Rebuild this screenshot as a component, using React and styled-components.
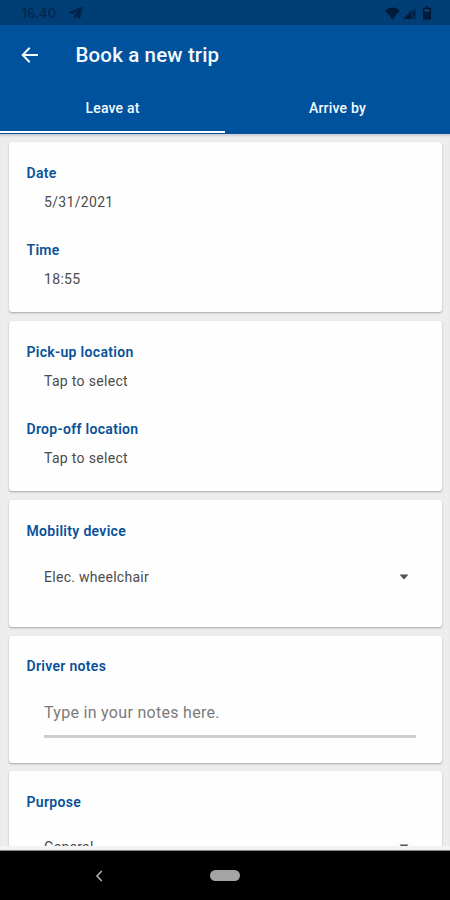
import React from "react";
import styled, { createGlobalStyle } from "styled-components";

const GlobalStyle = createGlobalStyle`
  * { box-sizing: border-box; }
  body { margin: 0; background: #000; font-family: Roboto, sans-serif; }
`;

const Screen = styled.div`
  width: 450px;
  height: 900px;
  display: flex;
  flex-direction: column;
  overflow: hidden;
  background: #ededee;
`;

const StatusBar = styled.div`
  height: 25px;
  flex: none;
  display: flex;
  align-items: center;
  padding: 1px 18px 0 21.5px;
  background: #003e75;
  color: #032348;
  svg { display: block; }
`;

const Clock = styled.span`
  width: 46.5px;
  font: 400 13.5px/20px Inter, sans-serif;
  white-space: nowrap;
`;

const StatusIcons = styled.div`
  margin-left: auto;
  display: flex;
  align-items: center;
  gap: 3px;
  svg:last-child { margin-left: 2px; }
`;

const Header = styled.header`
  height: 109px;
  flex: none;
  background: #00529d;
  color: #f5faff;
`;

const TitleBar = styled.div`
  height: 60px;
  display: flex;
  align-items: center;
  padding-left: 20px;
  svg { display: block; }
`;

const Title = styled.h1`
  margin: 0 0 0 35.5px;
  font-size: 20.5px;
  font-weight: 500;
  line-height: 28px;
  letter-spacing: 0.14px;
  white-space: nowrap;
`;

const Tabs = styled.div`
  display: flex;
  height: 49px;
`;

const Tab = styled.button`
  flex: 1;
  height: 48px;
  border: 0;
  border-bottom: 2px solid ${(p) => (p.$active ? "#fbfbff" : "transparent")};
  background: none;
  color: inherit;
  padding: 0;
  font: 500 14px/20px Roboto, sans-serif;
  letter-spacing: 0.2px;
`;

const Content = styled.main`
  height: 712px;
  flex: none;
  overflow: hidden;
  display: flex;
  flex-direction: column;
  padding: 8px 8px 0 9px;
  box-shadow: inset 0 3px 2px -1px #cfced6;
`;

const Card = styled.section`
  flex: none;
  height: ${(p) => p.$height}px;
  margin-bottom: ${(p) => p.$gap || 9}px;
  padding: ${(p) => p.$top || 21}px 26px 0 17.5px;
  border-radius: 3px;
  background: #fefefe;
  box-shadow: 0 1px 2px rgba(0, 0, 0, 0.3);
`;

const Field = styled.div`
  margin-bottom: 28px;
`;

const Label = styled.div`
  color: #08529a;
  font-size: 14px;
  font-weight: 600;
  line-height: 20px;
  letter-spacing: 0.31px;
`;

const Value = styled.div`
  margin: 9px 0 0 17.5px;
  color: #4b4b4b;
  font-size: 14px;
  line-height: 20px;
  letter-spacing: 0.32px;
`;

const Select = styled.div`
  display: flex;
  align-items: center;
  justify-content: space-between;
  margin: ${(p) => p.$offset}px 0 0 17.5px;
  padding-right: 7px;
  color: #4b4b4b;
  font-size: 14px;
  line-height: 20px;
  letter-spacing: 0.28px;
`;

const NotesInput = styled.input`
  display: block;
  width: 372px;
  height: 40px;
  margin: 22px 0 0 17.5px;
  padding: 0 0 9px;
  border: 0;
  border-bottom: 3px solid #cecece;
  border-radius: 0;
  background: none;
  font: 400 16px/20px Roboto, sans-serif;
  letter-spacing: 0.3px;
  &::placeholder { color: #7b7b7b; opacity: 1; }
`;

const BottomEdge = styled.div`
  height: 5px;
  flex: none;
  background: #f3f3f3;
  border-bottom: 1px solid #858585;
`;

const NavBar = styled.nav`
  flex: 1;
  display: grid;
  grid-template-columns: 1fr 30px 1fr;
  align-items: center;
  background: #000;
  svg { display: block; margin-left: 95px; }
`;

const HomePill = styled.span`
  height: 11px;
  border-radius: 6px;
  background: #a4a4a4;
`;

const Caret = () => (
  <svg width="10" height="6" viewBox="0 0 10 6">
    <path d="M.5 .5h9L5 5.5z" fill="#505050" />
  </svg>
);

function Entry({ label, value }) {
  return (
    <Field>
      <Label>{label}</Label>
      <Value>{value}</Value>
    </Field>
  );
}

function SelectField({ label, value, offset = 26 }) {
  return (
    <>
      <Label>{label}</Label>
      <Select $offset={offset}>
        <span>{value}</span>
        <Caret />
      </Select>
    </>
  );
}

export default function App() {
  return (
    <Screen>
      <GlobalStyle />
      <StatusBar>
        <Clock>16.40</Clock>
        <svg width="15" height="14" viewBox="0 0 15 14">
          <path d="M14.700 .5 .3 6.500 4.500 8l6.800-4.600L6.200 8.800v4.100l2-2.400 3.900 2.600z" fill="currentColor" />
        </svg>
        <StatusIcons>
          <svg width="15" height="13" viewBox="0 0 15 13">
            <path d="M.3 3.500C4.300-.4 10.700-.4 14.700 3.500L7.500 12.600z" fill="#021a3b" />
          </svg>
          <svg width="14" height="14" viewBox="0 0 14 14">
            <path d="M0 13 13 0v13z" fill="#021a3b" opacity=".35" />
            <path d="M0 13 8.500 4.500V13zM10.500 5H12v6h-1.500zM10.500 12H12v1h-1.500z" fill="#021a3b" />
          </svg>
          <svg width="10" height="14" viewBox="0 0 10 14">
            <path d="M3 .5h4V2h2v11.500H1V2h2z" fill="#021a3b" />
            <path d="M2.500 3.500h5v2h-5z" fill="#174a78" />
          </svg>
        </StatusIcons>
      </StatusBar>
      <Header>
        <TitleBar>
          <svg width="20" height="18" viewBox="0 0 20 18" fill="none" stroke="currentColor" strokeWidth="2">
            <path d="M18 9H3M9.700 1.700 2.700 9l7 7.300" />
          </svg>
          <Title>Book a new trip</Title>
        </TitleBar>
        <Tabs>
          <Tab $active>Leave at</Tab>
          <Tab>Arrive by</Tab>
        </Tabs>
      </Header>
      <Content>
        <Card $height={170}>
          <Entry label="Date" value="5/31/2021" />
          <Entry label="Time" value="18:55" />
        </Card>
        <Card $height={170}>
          <Entry label="Pick-up location" value="Tap to select" />
          <Entry label="Drop-off location" value="Tap to select" />
        </Card>
        <Card $height={127}>
          <SelectField label="Mobility device" value="Elec. wheelchair" />
        </Card>
        <Card $height={127} $gap={8} $top={20}>
          <Label>Driver notes</Label>
          <NotesInput placeholder="Type in your notes here." />
        </Card>
        <Card $height={126}>
          <SelectField label="Purpose" value="General" offset={25} />
        </Card>
      </Content>
      <BottomEdge />
      <NavBar>
        <svg width="8" height="12" viewBox="0 0 8 12" fill="none" stroke="#aaa" strokeWidth="1.700">
          <path d="M6.800 1 2 6l4.800 5" />
        </svg>
        <HomePill />
      </NavBar>
    </Screen>
  );
}
